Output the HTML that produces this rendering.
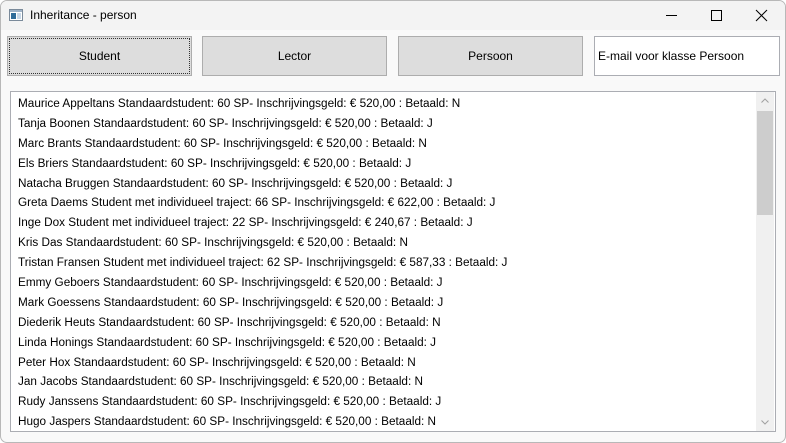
<!DOCTYPE html>
<html><head><meta charset="utf-8"><style>
*{margin:0;padding:0;box-sizing:border-box}
body{width:786px;height:443px;overflow:hidden;background:#fff;font-family:"Liberation Sans",sans-serif;font-size:12px;color:#000}
.win{position:absolute;left:0;top:0;width:786px;height:443px;border:1px solid #b8b8b8;border-radius:7px;background:#f9f9f9;overflow:hidden}
.title{position:absolute;left:-1px;top:-1px;width:786px;height:30px;background:#f3f3f3}
.title .t{position:absolute;left:30px;top:8px;font-size:12px}
.btn{position:absolute;top:35px;height:40px;background:#dddddd;border:1px solid #adadad;text-align:center;line-height:38px;font-size:12px}
.tb{position:absolute;left:593px;top:35px;width:186px;height:40px;background:#fff;border:1px solid #abadb3;line-height:38px;padding-left:3px;font-size:12px}
.list{position:absolute;left:9px;top:90px;width:766px;height:341px;background:#fff;border:1px solid #abadb3}
.rows{position:absolute;left:7px;top:5px;font-size:11.75px;white-space:nowrap}
.rows div{height:19.9px;line-height:14px}
.sb{position:absolute;left:745px;top:0;width:18px;height:339px;background:#f0f0f0}
.thumb{position:absolute;left:1px;top:19px;width:16px;height:104px;background:#cdcdcd}
</style></head><body><div class="win">
<div class="title">
<svg style="position:absolute;left:9px;top:9px" width="14" height="12"><rect x="0.5" y="0.5" width="13" height="11" fill="#fff" stroke="#7a8a9a"/><rect x="1" y="1" width="12" height="2" fill="#9fb3c8"/><rect x="2" y="4" width="5" height="6" fill="#2f6c9a"/><rect x="8" y="4" width="4" height="6" fill="#c8d8e8"/></svg>
<span class="t">Inheritance - person</span>
<svg style="position:absolute;left:660px;top:9px" width="110" height="14"><line x1="6" y1="6.5" x2="17" y2="6.5" stroke="#000"/><rect x="51.5" y="1.5" width="10" height="10" fill="none" stroke="#000"/><path d="M96 1 L107 12 M107 1 L96 12" stroke="#000"/></svg>
</div>
<div class="btn" style="left:6px;width:185px;outline:1px dotted #333;outline-offset:-3px">Student</div>
<div class="btn" style="left:201px;width:185px">Lector</div>
<div class="btn" style="left:397px;width:185px">Persoon</div>
<div class="tb">E-mail voor klasse Persoon</div>
<div class="list"><div class="rows">
<div>Maurice Appeltans Standaardstudent: 60 SP- Inschrijvingsgeld: € 520,00 : Betaald: N</div>
<div>Tanja Boonen Standaardstudent: 60 SP- Inschrijvingsgeld: € 520,00 : Betaald: J</div>
<div>Marc Brants Standaardstudent: 60 SP- Inschrijvingsgeld: € 520,00 : Betaald: N</div>
<div>Els Briers Standaardstudent: 60 SP- Inschrijvingsgeld: € 520,00 : Betaald: J</div>
<div>Natacha Bruggen Standaardstudent: 60 SP- Inschrijvingsgeld: € 520,00 : Betaald: J</div>
<div>Greta Daems Student met individueel traject: 66 SP- Inschrijvingsgeld: € 622,00 : Betaald: J</div>
<div>Inge Dox Student met individueel traject: 22 SP- Inschrijvingsgeld: € 240,67 : Betaald: J</div>
<div>Kris Das Standaardstudent: 60 SP- Inschrijvingsgeld: € 520,00 : Betaald: N</div>
<div>Tristan Fransen Student met individueel traject: 62 SP- Inschrijvingsgeld: € 587,33 : Betaald: J</div>
<div>Emmy Geboers Standaardstudent: 60 SP- Inschrijvingsgeld: € 520,00 : Betaald: J</div>
<div>Mark Goessens Standaardstudent: 60 SP- Inschrijvingsgeld: € 520,00 : Betaald: J</div>
<div>Diederik Heuts Standaardstudent: 60 SP- Inschrijvingsgeld: € 520,00 : Betaald: N</div>
<div>Linda Honings Standaardstudent: 60 SP- Inschrijvingsgeld: € 520,00 : Betaald: J</div>
<div>Peter Hox Standaardstudent: 60 SP- Inschrijvingsgeld: € 520,00 : Betaald: N</div>
<div>Jan Jacobs Standaardstudent: 60 SP- Inschrijvingsgeld: € 520,00 : Betaald: N</div>
<div>Rudy Janssens Standaardstudent: 60 SP- Inschrijvingsgeld: € 520,00 : Betaald: J</div>
<div>Hugo Jaspers Standaardstudent: 60 SP- Inschrijvingsgeld: € 520,00 : Betaald: N</div>
</div>
<div class="sb"><svg style="position:absolute;left:5px;top:6px" width="8" height="5"><path d="M0.5 4.5 L4 1 L7.5 4.5" fill="none" stroke="#a0a0a0"/></svg><div class="thumb"></div><svg style="position:absolute;left:5px;top:328px" width="8" height="5"><path d="M0.5 0.5 L4 4 L7.5 0.5" fill="none" stroke="#a0a0a0"/></svg></div>
</div>
</div></body></html>
